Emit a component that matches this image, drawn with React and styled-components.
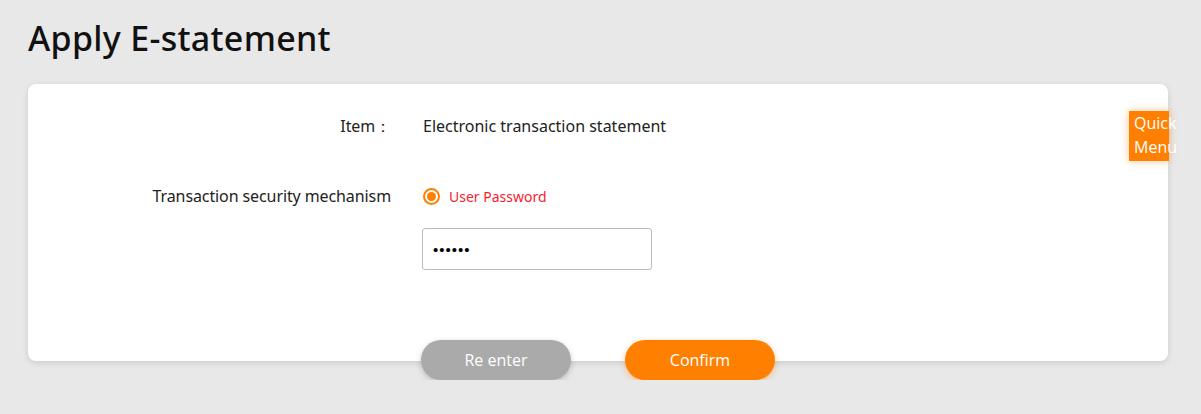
import React from 'react';
import styled, { createGlobalStyle } from 'styled-components';

const GlobalStyle = createGlobalStyle`
  body {
    margin: 0;
    background: #e8e8e8;
    font-family: "Noto Sans", "Open Sans", sans-serif;
  }
`;

const Page = styled.div`
  padding: 16px 33px 0 28px;
`;

const Title = styled.h1`
  margin: 0 0 24px;
  font-size: 34px;
  font-weight: 500;
  line-height: 44px;
  letter-spacing: 0.3px;
  color: #111;
`;

const Card = styled.div`
  position: relative;
  background: #fff;
  border-radius: 8px;
  box-shadow: 0 2px 6px rgba(0, 0, 0, 0.12);
  padding: 30px 0 70px;
  height: 277px;
  box-sizing: border-box;
`;

const Row = styled.div`
  display: grid;
  grid-template-columns: 363px 1fr;
  column-gap: 32px;
  align-items: start;
  margin-bottom: ${(props) => props.gap || 0}px;
`;

const Label = styled.div`
  text-align: right;
  font-size: 16px;
  line-height: 24px;
  letter-spacing: -0.1px;
  color: #222;
`;

const Value = styled.div`
  font-size: 16px;
  line-height: 24px;
  color: #222;
`;

const Options = styled.div`
  display: flex;
  flex-direction: column;
  gap: 20px;
`;

const RadioLine = styled.label`
  display: flex;
  align-items: center;
  gap: 9px;
  height: 24px;
  font-size: 14px;
  color: #f5222d;
`;

const RadioDot = styled.span`
  width: 13px;
  height: 13px;
  border-radius: 50%;
  border: 2px solid #ff8000;
  display: flex;
  align-items: center;
  justify-content: center;
  &::after {
    content: '';
    width: 9px;
    height: 9px;
    border-radius: 50%;
    background: #ff8000;
  }
`;

const PasswordInput = styled.input`
  width: 230px;
  height: 42px;
  box-sizing: border-box;
  border: 1px solid #bbb;
  border-radius: 3px;
  padding: 0 10px;
  font-size: 15px;
  letter-spacing: 1px;
  margin-left: -1px;
  outline: none;
`;

const QuickMenu = styled.div`
  position: absolute;
  z-index: 2;
  top: 27px;
  right: -1px;
  width: 40px;
  height: 50px;
  box-sizing: border-box;
  padding: 0 0 0 5px;
  background: #ff8000;
  box-shadow: 0 0 8px rgba(255, 128, 0, 0.45);
  color: #fff;
  font-size: 16px;
  line-height: 24px;
  white-space: nowrap;
  font-family: "Open Sans", sans-serif;
`;

const ButtonBar = styled.div`
  position: relative;
  z-index: 1;
  display: flex;
  gap: 54px;
  margin: -21px 0 0 393px;
`;

const Button = styled.button`
  width: 150px;
  height: 40px;
  border: none;
  border-radius: 20px;
  font-family: "Open Sans", sans-serif;
  font-size: 16px;
  color: #fff;
  background: ${(props) => (props.primary ? '#ff8000' : '#aaaaaa')};
  box-shadow: ${(props) =>
    props.primary ? '0 2px 6px rgba(255, 128, 0, 0.4)' : '0 2px 6px rgba(0, 0, 0, 0.2)'};
  cursor: pointer;
`;

export default function App() {
  return (
    <Page>
      <GlobalStyle />
      <Title>Apply E-statement</Title>
      <Card>
        <Row gap={46}>
          <Label>Item：</Label>
          <Value>Electronic transaction statement</Value>
        </Row>
        <Row>
          <Label>Transaction security mechanism</Label>
          <Options>
            <RadioLine>
              <RadioDot />
              User Password
            </RadioLine>
            <PasswordInput type="password" defaultValue="123456" />
          </Options>
        </Row>
        <QuickMenu>
          Quick
          <br />
          Menu
        </QuickMenu>
      </Card>
      <ButtonBar>
        <Button>Re enter</Button>
        <Button primary>Confirm</Button>
      </ButtonBar>
    </Page>
  );
}
